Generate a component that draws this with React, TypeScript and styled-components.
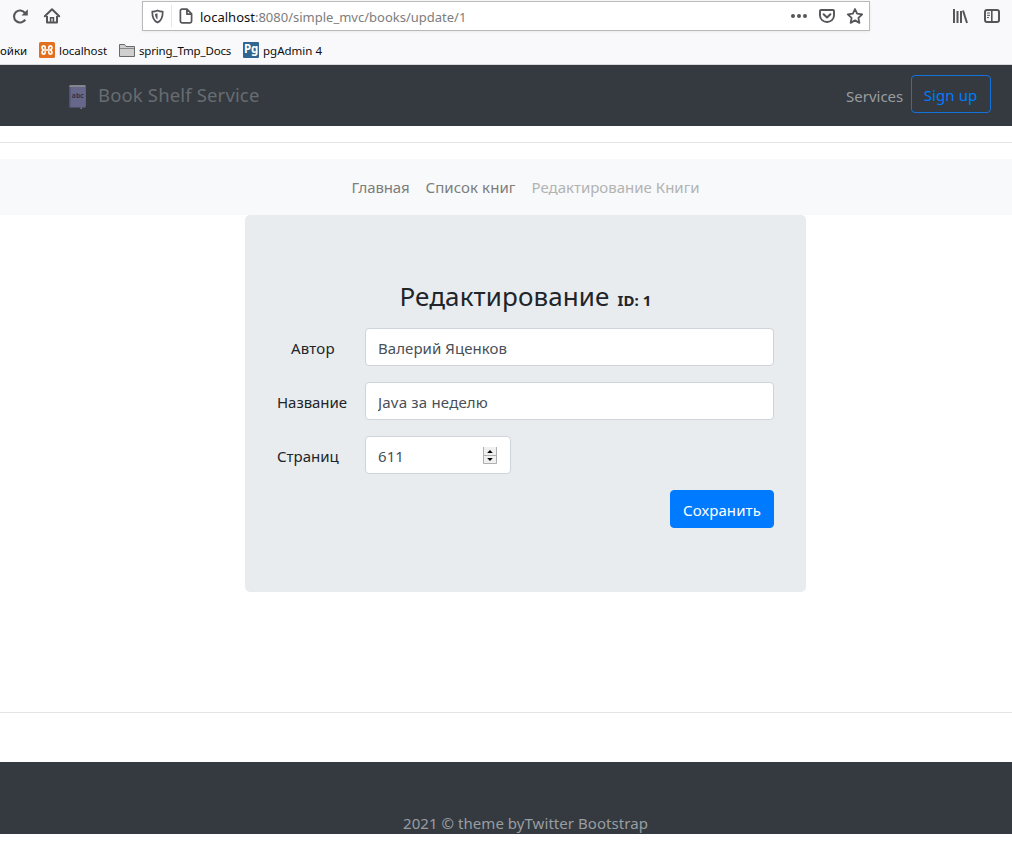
import React from "react";
import styled, { createGlobalStyle } from "styled-components";

const GlobalStyle = createGlobalStyle`
  *, *::before, *::after { box-sizing: border-box; }
  body {
    margin: 0;
    background: #fff;
    color: #212529;
    font: 400 15px/24px "Noto Sans", "Open Sans", sans-serif;
  }
  button, input { font: inherit; }
`;

const Page = styled.div`
  height: 846px;
  overflow: hidden;
`;

/* Browser chrome */
const Chrome = styled.header`
  height: 65px;
  background: #f9f9fb;
  border-bottom: 1px solid #d8d8da;
`;

const Toolbar = styled.div`
  display: flex;
  align-items: center;
  height: 33px;
  padding: 0 11px 1px 11px;
`;

const ToolIcon = styled.svg<{ $size?: number }>`
  display: block;
  flex: none;
  width: ${(p) => p.$size ?? 18}px;
  height: ${(p) => p.$size ?? 18}px;
  fill: none;
  stroke: #55555a;
  stroke-width: 2;
`;

const NavButtons = styled.div`
  display: flex;
  gap: 14px;
  width: 131px;
`;

const AddressBar = styled.div`
  display: flex;
  align-items: center;
  width: 728px;
  height: 30px;
  padding: 0 5px 0 7px;
  background: #fff;
  border: 1px solid #b9bab8;
  box-shadow: 0 1px 3px rgba(0, 0, 0, 0.06);
`;

const Divider = styled.span`
  width: 1px;
  height: 22px;
  margin: 0 6px;
  background: #e4e4e4;
`;

const Url = styled.span`
  flex: 1;
  margin-left: 6px;
  padding-top: 2px;
  color: #7d7d7d;
  font-size: 13px;
  line-height: 20px;
  b { color: #111; font-weight: 400; }
`;

const AddressActions = styled.div`
  display: flex;
  gap: 10px;
`;

const SideActions = styled.div`
  display: flex;
  gap: 14px;
  margin-left: auto;
`;

const Bookmarks = styled.nav`
  display: flex;
  align-items: center;
  height: 31px;
  padding-top: 3px;
`;

const Bookmark = styled.span<{ $width: number; $track?: number }>`
  display: flex;
  align-items: center;
  gap: 4px;
  width: ${(p) => p.$width}px;
  color: #0c0c0d;
  font-size: 11.5px;
  line-height: 16px;
  letter-spacing: ${(p) => p.$track ?? 0}px;
  white-space: nowrap;
`;

const BookmarkText = styled.span`
  padding-top: 1px;
`;

const PgBadge = styled.span`
  width: 16px;
  height: 16px;
  border-radius: 1px;
  background: #2f6792;
  color: #fff;
  font: 700 11.5px/13px "Noto Sans", sans-serif;
  letter-spacing: -0.2px;
  text-align: center;
`;

/* Site header */
const SiteHeader = styled.header`
  display: flex;
  align-items: center;
  height: 61px;
  padding: 0 21px 0 68px;
  background: #343a40;
`;

const Brand = styled.a`
  display: flex;
  align-items: center;
  gap: 11px;
  margin-bottom: 2px;
  color: #686c71;
  font-size: 18.5px;
  line-height: 30px;
  letter-spacing: 0.15px;
`;

const BookIcon = styled.svg`
  width: 19px;
  height: 26px;
  margin-top: 5px;
`;

const HeaderActions = styled.div`
  display: flex;
  align-items: center;
  gap: 8px;
  margin-left: auto;
  color: #9a9da0;
`;

const Button = styled.button<{ $primary?: boolean }>`
  display: block;
  width: ${(p) => (p.$primary ? 104 : 80)}px;
  height: 38px;
  padding: 1px 12px 0;
  border: 1px solid #007bff;
  border-radius: 4px;
  background: ${(p) => (p.$primary ? "#007bff" : "transparent")};
  color: ${(p) => (p.$primary ? "#fff" : "#007bff")};
  letter-spacing: 0.1px;
  white-space: nowrap;
`;

const HeaderButton = styled(Button)`
  margin-bottom: 4px;
  padding: 3px 12px 0 11px;
  border-color: #1472db;
`;

const HeaderLink = styled.a`
  width: 57px;
  margin-top: 1px;
  white-space: nowrap;
`;

const Rule = styled.hr<{ $top: number; $bottom: number }>`
  height: 1px;
  margin: ${(p) => p.$top}px 0 ${(p) => p.$bottom}px;
  border: 0;
  background: #e5e5e5;
`;

const Crumbs = styled.nav`
  display: flex;
  justify-content: center;
  gap: 16px;
  height: 56px;
  padding: 16px 0 0 39px;
  background: #f8f9fa;
`;

const Crumb = styled.a<{ $width: number; $track: number; $muted?: boolean }>`
  width: ${(p) => p.$width}px;
  color: ${(p) => (p.$muted ? "#b2b3b3" : "#7c7d7d")};
  letter-spacing: ${(p) => p.$track}px;
  white-space: nowrap;
`;

/* Form */
const Card = styled.form`
  width: 561px;
  height: 377px;
  margin-left: 245px;
  padding: 63px 32px 0;
  border-radius: 5px;
  background: #e8ecef;
`;

const Title = styled.h3`
  display: flex;
  justify-content: center;
  align-items: baseline;
  gap: 8px;
  height: 50px;
  margin: 0;
  font-size: 26px;
  font-weight: 400;
  line-height: 37px;
  letter-spacing: 0.1px;
  small { font-size: 15px; font-weight: 700; }
`;

const Field = styled.label`
  display: flex;
  height: 38px;
  margin-bottom: 16px;
`;

const Caption = styled.span<{ $indent?: number; $track?: number }>`
  width: 88px;
  padding: 8px 0 0 ${(p) => p.$indent ?? 0}px;
  letter-spacing: ${(p) => p.$track ?? 0}px;
`;

const InputBox = styled.span<{ $width: number }>`
  display: flex;
  align-items: center;
  width: ${(p) => p.$width}px;
  padding: 0 13px 0 12px;
  border: 1px solid #ced4da;
  border-radius: 4px;
  background: #fff;
`;

const Input = styled.input<{ $track: number }>`
  flex: 1;
  min-width: 0;
  height: 24px;
  margin-top: 2px;
  padding: 0;
  border: 0;
  outline: 0;
  background: transparent;
  color: #495057;
  letter-spacing: ${(p) => p.$track}px;
`;

const Spinner = styled.svg`
  width: 14px;
  height: 17px;
`;

const Actions = styled.div`
  display: flex;
  justify-content: flex-end;
`;

const Footer = styled.footer`
  height: 72px;
  padding: 49px 0 0 39px;
  overflow: hidden;
  background: #343a40;
  color: #9a9da0;
  letter-spacing: 0.05px;
  text-align: center;
`;

export default function App() {
  return (
    <>
      <GlobalStyle />
      <Page>
        <Chrome>
          <Toolbar>
            <NavButtons>
              <ToolIcon viewBox="0 0 18 18">
                <path d="M14.2 12.6A6 6 0 1 1 14 6.1" strokeWidth="2.1" />
                <path d="M16.8 2.2v6.3h-6.3z" fill="#55555a" stroke="none" />
              </ToolIcon>
              <ToolIcon viewBox="0 0 18 18">
                <path d="M1.8 9.2 9 2.2l7.2 7" strokeLinecap="round" strokeLinejoin="round" />
                <path d="M4 9v6.5h10V9" strokeLinejoin="round" />
                <path d="M7.6 15.5v-4.7h2.8v4.7" strokeWidth="1.6" />
              </ToolIcon>
            </NavButtons>
            <AddressBar>
              <ToolIcon viewBox="0 0 16 16" $size={15}>
                <path d="M8 1.5c1.8 1 3.7 1.3 5.6 1.3 0 5.6-1.2 9.6-5.6 11.7C3.6 12.4 2.4 8.4 2.4 2.8 4.3 2.8 6.2 2.5 8 1.5z" strokeWidth="1.8" strokeLinejoin="round" />
                <path d="M8 4.6v6.6c-1.7-1.4-2.5-3.4-2.7-6z" fill="#55555a" stroke="none" />
              </ToolIcon>
              <Divider />
              <ToolIcon viewBox="0 0 16 16" $size={16}>
                <path d="M4 1.2h5l4.6 4.6v7.4a1.6 1.6 0 0 1-1.6 1.6H4a1.6 1.6 0 0 1-1.6-1.6V2.8A1.6 1.6 0 0 1 4 1.2z M8.9 1.5v4.6h4.5" strokeWidth="1.7" strokeLinejoin="round" />
              </ToolIcon>
              <Url><b>localhost</b>:8080/simple_mvc/books/update/1</Url>
              <AddressActions>
                <ToolIcon viewBox="0 0 18 18">
                  <g fill="#55555a" stroke="none">
                    <circle cx="3" cy="9" r="2" />
                    <circle cx="9" cy="9" r="2" />
                    <circle cx="15" cy="9" r="2" />
                  </g>
                </ToolIcon>
                <ToolIcon viewBox="0 0 18 18">
                  <path d="M3 3h12a1 1 0 0 1 1 1v4.5a7 6.5 0 0 1-14 0V4a1 1 0 0 1 1-1z" strokeWidth="1.9" />
                  <path d="m5.6 7.3 3.4 3.2 3.4-3.2" strokeLinecap="round" strokeLinejoin="round" />
                </ToolIcon>
                <ToolIcon viewBox="0 0 18 18">
                  <path d="m9 2 2.1 4.7 5.1.6-3.8 3.5 1 5.1L9 13.4l-4.4 2.5 1-5.1-3.8-3.5 5.1-.6z" strokeWidth="1.8" strokeLinejoin="round" />
                </ToolIcon>
              </AddressActions>
            </AddressBar>
            <SideActions>
              <ToolIcon viewBox="0 0 18 18">
                <path d="M3 2v14M6.5 4v12M10 4v12M12 3.5l4 12.5" />
              </ToolIcon>
              <ToolIcon viewBox="0 0 18 18">
                <rect x="2" y="3" width="14" height="12" rx="2" />
                <path d="M8.8 3v12" strokeWidth="1.6" />
                <path d="M4 6h3M4 8.3h3M4 10.6h2" strokeWidth="1" />
              </ToolIcon>
            </SideActions>
          </Toolbar>
          <Bookmarks>
            <Bookmark $width={39}><BookmarkText>ойки</BookmarkText></Bookmark>
            <Bookmark $width={80} $track={-0.06}>
              <svg width="16" height="16" viewBox="0 0 16 16">
                <rect width="16" height="16" rx="1.5" fill="#e2701f" />
                <path d="M6.2 5.200C5.800 3.300 3 3.300 3 5.400 3 6.900 4.200 7.300 4.200 8S3 9.100 3 10.600c0 2.100 2.800 2.100 3.200.2M9.800 5.200C10.200 3.300 13 3.300 13 5.400c0 1.500-1.200 1.900-1.200 2.600s1.200 1.100 1.200 2.600c0 2.100-2.800 2.100-3.200.2M4.200 8h7.600M6.200 5.200v1M9.800 5.200v1M6.200 10.800v-1M9.800 10.800v-1" fill="none" stroke="#fff" strokeWidth="1.7" strokeLinecap="round" />
              </svg>
              <BookmarkText>localhost</BookmarkText>
            </Bookmark>
            <Bookmark $width={124} $track={-0.17}>
              <svg width="16" height="16" viewBox="0 0 16 16">
                <path d="M.5 14.5V2.5h5l1.5 2h8.500v10z" fill="#cfcfcf" stroke="#6a6a6a" />
                <path d="M1 6.5h14" stroke="#8a8a8a" />
              </svg>
              <BookmarkText>spring_Tmp_Docs</BookmarkText>
            </Bookmark>
            <Bookmark $width={90}>
              <PgBadge>Pg</PgBadge>
              <BookmarkText>pgAdmin 4</BookmarkText>
            </Bookmark>
          </Bookmarks>
        </Chrome>

        <SiteHeader>
          <Brand>
            <BookIcon viewBox="0 0 19 26">
              <path d="M1 2.5 2 1H17.5v21H1z" fill="#85868c" />
              <path d="M1 3h16.5v20.5H2.5A1.5 1.5 0 0 1 1 22z" fill="#66678a" />
              <path d="M1 3h1.500v20.500A1.500 1.500 0 0 1 1 22z" fill="#515177" />
              <path d="M12.5 23.5h1.5v1.5h-1.5z" fill="#7d7e8c" />
              <text x="3.8" y="13.5" fontFamily="Open Sans, sans-serif" fontSize="7" fontWeight="700" textLength="12" lengthAdjust="spacingAndGlyphs" fill="#33344c">abc</text>
            </BookIcon>
            Book Shelf Service
          </Brand>
          <HeaderActions>
            <HeaderLink>Services</HeaderLink>
            <HeaderButton>Sign up</HeaderButton>
          </HeaderActions>
        </SiteHeader>

        <Rule $top={16} $bottom={16} />

        <Crumbs>
          <Crumb $width={58} $track={-0.14}>Главная</Crumb>
          <Crumb $width={90} $track={0.08}>Список книг</Crumb>
          <Crumb $width={168} $track={0} $muted>Редактирование Книги</Crumb>
        </Crumbs>

        <Card>
          <Title>Редактирование <small>ID: 1</small></Title>
          <Field>
            <Caption $indent={14} $track={0.2}>Автор</Caption>
            <InputBox $width={409}><Input $track={0.06} defaultValue="Валерий Яценков" /></InputBox>
          </Field>
          <Field>
            <Caption $track={-0.05}>Название</Caption>
            <InputBox $width={409}><Input $track={0.18} defaultValue="Java за неделю" /></InputBox>
          </Field>
          <Field>
            <Caption>Страниц</Caption>
            <InputBox $width={146}>
              <Input $track={0.09} defaultValue="611" />
              <Spinner viewBox="0 0 14 17">
                <path d="M0 0h14v17H0z" fill="#f0f0f0" />
                <path d="M.5 0v16.5h13V0M0 8.5h14" fill="none" stroke="#b0b0b0" />
                <path d="M7 3 9.8 6H4.2zM7 14l2.8-3H4.2z" fill="#000" />
              </Spinner>
            </InputBox>
          </Field>
          <Actions><Button $primary type="button">Сохранить</Button></Actions>
        </Card>

        <Rule $top={120} $bottom={49} />
        <Footer>2021 © theme byTwitter Bootstrap</Footer>
      </Page>
    </>
  );
}
